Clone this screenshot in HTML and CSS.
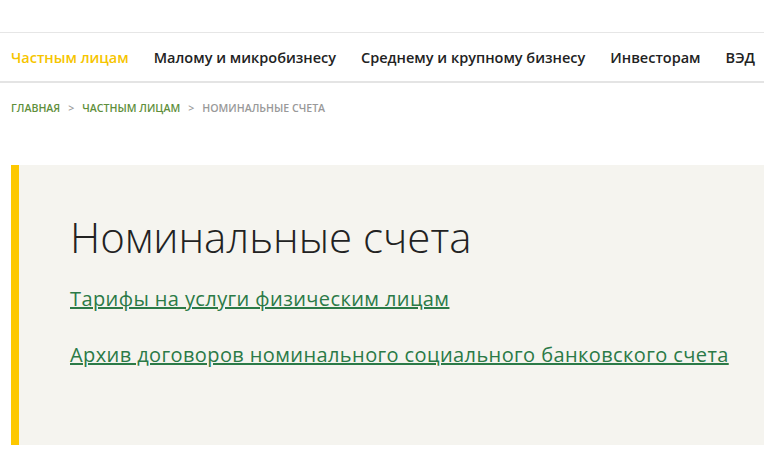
FILE: index.html
```html
<!DOCTYPE html>
<html lang="ru">

<head>
    <meta charset="utf-8">
    <title>Номинальные счета</title>
    <link rel="stylesheet" href="styles.css">
</head>

<body>
    <div class="top"></div>

    <!-- главное меню -->
    <nav class="menu">
        <a href="#" class="active">Частным лицам</a>
        <a href="#">Малому и микробизнесу</a>
        <a href="#">Среднему и крупному бизнесу</a>
        <a href="#">Инвесторам</a>
        <a href="#">ВЭД</a>
    </nav>

    <!-- хлебные крошки -->
    <div class="crumbs">
        <a href="#">Главная</a>
        <span class="sep">&gt;</span>
        <a href="#">Частным лицам</a>
        <span class="sep">&gt;</span>
        <span class="cur">Номинальные счета</span>
    </div>

    <section class="panel">
        <h1>Номинальные счета</h1>
        <a href="#" class="doc">Тарифы на услуги физическим лицам</a>
        <a href="#" class="doc">Архив договоров номинального социального банковского счета</a>
    </section>
</body>

</html>
```

FILE: styles.css
```css
body {
    margin: 0;
    font-family: "Open Sans", "Liberation Sans", sans-serif;
    color: #222;
    background: #fff;
    overflow: hidden;
}

/* верхняя полоса */
.top {
    height: 32px;
    border-bottom: 1px solid #e6e6e6;
}

/* меню */
.menu {
    display: flex;
    align-items: center;
    gap: 25px;
    height: 48px;
    padding-left: 11px;
    border-bottom: 2px solid #e4e4e4;
    white-space: nowrap;
}
.menu a {
    color: #222;
    text-decoration: none;
    font-size: 14.5px;
    font-weight: 600;
}
.menu a.active {
    color: #f6c500;
}

/* крошки */
.crumbs {
    display: flex;
    gap: 8px;
    padding: 18px 0 0 11px;
    height: 82px;
    box-sizing: border-box;
    font-size: 10.6px;
    font-weight: 600;
    text-transform: uppercase;
}
.crumbs a {
    color: #5f8f3c;
    text-decoration: none;
}
.crumbs .sep,
.crumbs .cur {
    color: #999;
}

/* блок с желтой полосой */
.panel {
    margin-left: 11px;
    height: 280px;
    border-left: 8px solid #fdc800;
    background: #f5f4ef;
    padding: 47px 0 0 51px;
    box-sizing: border-box;
    display: flex;
    flex-direction: column;
    align-items: flex-start;
}
.panel h1 {
    margin: 0 0 24px;
    font-size: 42px;
    font-weight: 300;
    line-height: 50px;
    color: #222;
}
.doc {
    font-size: 20px;
    line-height: 26px;
    letter-spacing: 0.4px;
    color: #2b7a47;
    margin-bottom: 30px;
}
```
